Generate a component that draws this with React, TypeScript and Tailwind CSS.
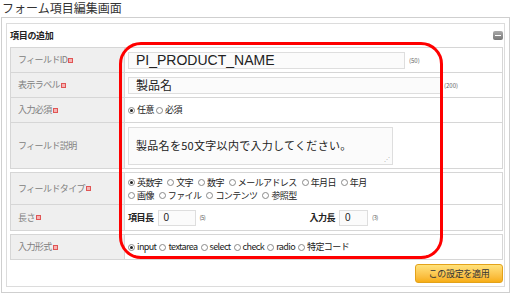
import React from "react";

const JP = { fontFamily: '"Noto Sans CJK JP", "Liberation Sans", sans-serif' };

function Mark() {
  return <span className="inline-block w-[5px] h-[5px] ml-[1px] bg-[#f6b3b3] border border-[#e05555] align-middle" />;
}

function Radio({ checked, label, gap = "mr-[4px]" }: { checked?: boolean; label: string; gap?: string }) {
  return (
    <span className={`inline-flex items-center ${gap}`}>
      <span className="w-[7px] h-[7px] rounded-full border border-[#8a8a8a] bg-white flex items-center justify-center mr-[2px]">
        {checked && <span className="w-[3px] h-[3px] rounded-full bg-[#222]" />}
      </span>
      <span>{label}</span>
    </span>
  );
}

function Label({ text, mark = true }: { text: string; mark?: boolean }) {
  return (
    <div className="w-[114px] shrink-0 bg-[#efefef] border-r border-[#d6d6d6] flex items-center pl-[7px] text-[9px] text-[#808080] tracking-[-0.6px]">
      <span>{text}</span>
      {mark && <Mark />}
    </div>
  );
}

export default function App() {
  return (
    <div className="w-[512px] h-[293px] bg-white relative overflow-hidden text-[#333]" style={JP}>
      <div className="h-[17px] pl-[2px] text-[12px] leading-[15px] text-[#333]">フォーム項目編集画面</div>
      <div className="ml-[1px] w-[509px] h-[276px] border border-[#cfcfcf] pt-[5px] pl-[4px] pr-[4px] pb-[5px]">
        <div className="h-full border border-[#dcdcdc] pl-[3px]">
          <div className="h-[23px] flex items-center justify-between">
            <span className="text-[9px] font-bold text-[#222] tracking-[-0.3px] mt-[1px]">項目の追加</span>
            <span className="w-[10px] h-[9px] rounded-[2px] bg-gradient-to-b from-[#aaa] to-[#777] flex items-center justify-center mr-[1px]">
              <span className="w-[6px] h-[1px] bg-white" />
            </span>
          </div>
          <div className="w-[493px] border border-[#d6d6d6]">
            <div className="h-[25px] flex border-b border-[#d6d6d6]">
              <Label text="フィールドID" />
              <div className="flex items-center pl-[3px]">
                <div className="w-[277px] h-[17px] border border-[#dedede] bg-[#fbfbfb] flex items-center pl-[7px] text-[14px] text-[#222]" style={{ fontFamily: '"Liberation Sans", sans-serif' }}>PI_PRODUCT_NAME</div>
                <span className="ml-[4px] text-[6px] text-[#666]">(50)</span>
              </div>
            </div>
            <div className="h-[25px] flex border-b border-[#d6d6d6]">
              <Label text="表示ラベル" />
              <div className="flex items-center pl-[3px]">
                <div className="w-[313px] h-[17px] border border-[#dedede] bg-[#fbfbfb] flex items-center pl-[7px] text-[12px] text-[#222]">製品名</div>
                <span className="ml-[3px] text-[6px] text-[#666]">(200)</span>
              </div>
            </div>
            <div className="h-[25px] flex border-b border-[#d6d6d6]">
              <Label text="入力必須" />
              <div className="flex items-center pl-[3px] text-[9px] text-[#222] tracking-[-0.5px]">
                <Radio checked label="任意" gap="mr-[2px]" />
                <Radio label="必須" />
              </div>
            </div>
            <div className="h-[45px] flex">
              <Label text="フィールド説明" mark={false} />
              <div className="flex items-center pl-[3px]">
                <div className="relative w-[265px] h-[38px] border border-[#dedede] bg-[#fbfbfb] flex items-center pl-[7px] text-[11px] text-[#222] tracking-[0.3px]">
                  製品名を50文字以内で入力してください。
                  <span className="absolute right-[2px] bottom-[2px] text-[6px] leading-[6px] text-[#aaa]">⋰</span>
                </div>
              </div>
            </div>
          </div>
          <div className="w-[493px] border border-[#d6d6d6] mt-[3px]">
            <div className="h-[32px] flex border-b border-[#d6d6d6]">
              <Label text="フィールドタイプ" />
              <div className="flex flex-col justify-center pl-[3px] text-[9px] text-[#222] tracking-[-0.6px] leading-[13px]">
                <div className="flex">
                  <Radio checked label="英数字" gap="mr-[5px]" />
                  <Radio label="文字" gap="mr-[5px]" />
                  <Radio label="数字" gap="mr-[5px]" />
                  <Radio label="メールアドレス" gap="mr-[5px]" />
                  <Radio label="年月日" gap="mr-[5px]" />
                  <Radio label="年月" />
                </div>
                <div className="flex">
                  <Radio label="画像" gap="mr-[5px]" />
                  <Radio label="ファイル" gap="mr-[5px]" />
                  <Radio label="コンテンツ" gap="mr-[5px]" />
                  <Radio label="参照型" />
                </div>
              </div>
            </div>
            <div className="h-[25px] flex">
              <Label text="長さ" />
              <div className="flex items-center pl-[3px] text-[9px] text-[#222] tracking-[-0.5px]">
                <span className="font-bold">項目長</span>
                <div className="ml-[4px] w-[38px] h-[16px] border border-[#dedede] bg-[#fbfbfb] flex items-center pl-[5px] text-[10px]" style={{ fontFamily: '"Liberation Sans", sans-serif' }}>0</div>
                <span className="ml-[4px] text-[6px] text-[#666]">(5)</span>
                <span className="ml-[104px] font-bold">入力長</span>
                <div className="ml-[4px] w-[29px] h-[16px] border border-[#dedede] bg-[#fbfbfb] flex items-center pl-[5px] text-[10px]" style={{ fontFamily: '"Liberation Sans", sans-serif' }}>0</div>
                <span className="ml-[4px] text-[6px] text-[#666]">(3)</span>
              </div>
            </div>
          </div>
          <div className="w-[493px] border border-[#d6d6d6] mt-[3px]">
            <div className="h-[24px] flex">
              <Label text="入力形式" />
              <div className="flex items-center pl-[3px] text-[9px] text-[#222] tracking-[-0.6px]">
                <Radio checked label="input" gap="mr-[3px]" />
                <Radio label="textarea" gap="mr-[3px]" />
                <Radio label="select" gap="mr-[3px]" />
                <Radio label="check" gap="mr-[3px]" />
                <Radio label="radio" gap="mr-[3px]" />
                <Radio label="特定コード" />
              </div>
            </div>
          </div>
          <div className="w-[493px] flex justify-end mt-[4px]">
            <div className="w-[88px] h-[19px] rounded-[3px] border border-[#e3a21a] bg-gradient-to-b from-[#ffe27a] to-[#f7ae10] flex items-center justify-center text-[9px] text-[#333] tracking-[-0.3px]">この設定を適用</div>
          </div>
        </div>
      </div>
      <div className="absolute left-[119px] top-[42px] w-[324px] h-[217px] border-[3px] border-[#f00] rounded-[22px] pointer-events-none" />
    </div>
  );
}
